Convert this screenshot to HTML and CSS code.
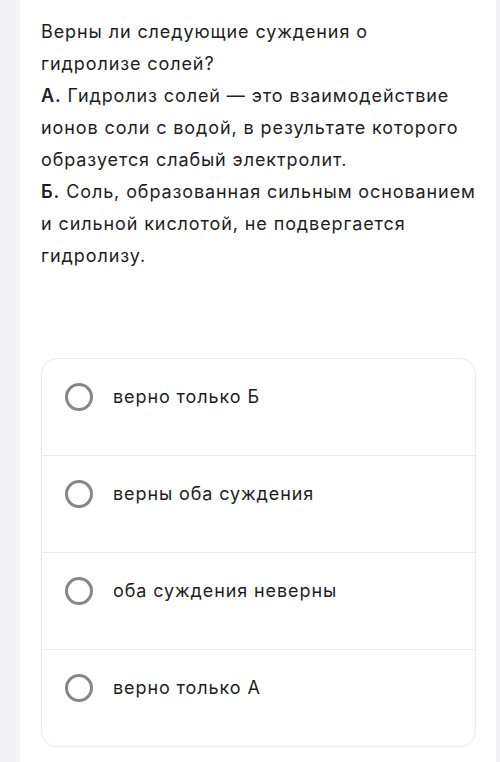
FILE: index.html
```html
<!DOCTYPE html>
<html lang="ru">
<head>
<meta charset="utf-8">
<link rel="stylesheet" href="styles.css">
</head>
<body>
<div class="page">
  <main class="panel">
    <p class="question">Верны ли следующие суждения о<br>гидролизе солей?<br><b>А.</b> Гидролиз солей — это взаимодействие ионов соли с водой, в результате которого образуется слабый электролит.<br><b>Б.</b> Соль, образованная сильным основанием и сильной кислотой, не подвергается гидролизу.</p>
    <div class="options">
      <div class="option"><span class="radio"></span><span class="label">верно только Б</span></div>
      <div class="option"><span class="radio"></span><span class="label">верны оба суждения</span></div>
      <div class="option"><span class="radio"></span><span class="label">оба суждения неверны</span></div>
      <div class="option"><span class="radio"></span><span class="label">верно только А</span></div>
    </div>
  </main>
</div>
</body>
</html>
```
FILE: styles.css
```css
* { box-sizing: border-box; }
html, body { margin: 0; padding: 0; }
body {
  background: #f4f4f8;
  font-family: Inter, "Noto Sans", sans-serif;
  color: #1e1e22;
}
.page {
  display: flex;
  padding-left: 20px;
  padding-right: 4px;
  min-height: 762px;
}
.panel {
  flex: 1;
  background: #ffffff;
  padding: 16px 20px 20px 21px;
}
.question {
  margin: 0;
  font-size: 18px;
  line-height: 32px;
  letter-spacing: 0.9px;
}
.question b { font-weight: 600; }
.options {
  margin-top: 86px;
  border: 1px solid #ebebef;
  border-radius: 16px;
  box-shadow: 0 1px 2px rgba(0,0,0,0.03);
}
.option {
  display: flex;
  align-items: center;
  gap: 20px;
  padding: 24px 23px 44px;
  height: 97px;
  border-top: 1px solid #ebebef;
}
.option:first-child { border-top: none; height: 96px; }
.radio {
  width: 28px;
  height: 28px;
  border: 3px solid #86868d;
  border-radius: 50%;
  flex: none;
}
.label {
  font-size: 18px;
  line-height: 28px;
  letter-spacing: 0.9px;
}
```
